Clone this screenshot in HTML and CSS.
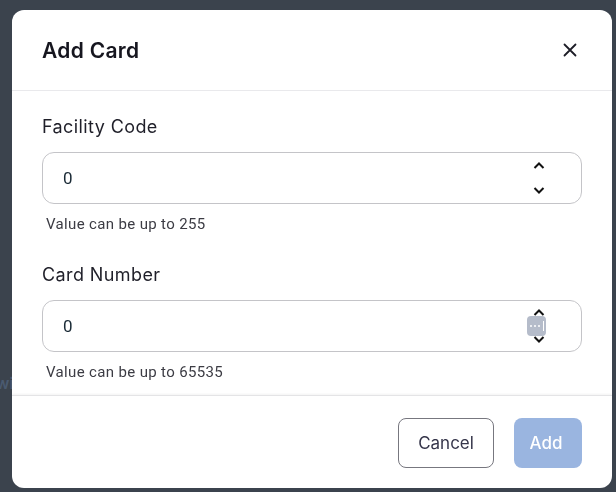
FILE: index.html
```html
<!DOCTYPE html>
<html lang="en">
<head>
<meta charset="utf-8">
<title>Add Card</title>
<link rel="stylesheet" href="styles.css">
</head>
<body>
  <div class="page">
    <p class="page-line">with</p>
  </div>

  <div class="backdrop">
    <div class="modal" role="dialog" aria-labelledby="modal-title">
      <header class="modal-header">
        <h2 id="modal-title" class="modal-title">Add Card</h2>
        <button class="close-btn" aria-label="Close">
          <svg width="14" height="14" viewBox="0 0 14 14" aria-hidden="true">
            <path d="M1.5 1.5 L12.5 12.5 M12.5 1.5 L1.5 12.5" stroke="#1d1d27" stroke-width="1.8" stroke-linecap="round" fill="none"/>
          </svg>
        </button>
      </header>

      <div class="modal-body">
        <div class="field">
          <label class="field-label">Facility Code</label>
          <div class="number-input">
            <span class="number-value">0</span>
            <span class="spinner">
              <svg width="14" height="36" viewBox="0 0 14 36" aria-hidden="true">
                <path d="M2.5 8 L7 3.5 L11.5 8" stroke="#111" stroke-width="2" fill="none"/>
                <path d="M2.5 28 L7 32.5 L11.5 28" stroke="#111" stroke-width="2" fill="none"/>
              </svg>
            </span>
          </div>
          <p class="field-help">Value can be up to 255</p>
        </div>

        <div class="field">
          <label class="field-label">Card Number</label>
          <div class="number-input">
            <span class="number-value">0</span>
            <span class="spinner">
              <svg width="14" height="36" viewBox="0 0 14 36" aria-hidden="true">
                <path d="M2.5 7 L7 2.5 L11.5 7" stroke="#111" stroke-width="2" fill="none"/>
                <path d="M2.5 29 L7 33.5 L11.5 29" stroke="#111" stroke-width="2" fill="none"/>
              </svg>
              <span class="autofill-badge">
                <span class="dot"></span><span class="dot"></span><span class="dot"></span><span class="caret"></span>
              </span>
            </span>
          </div>
          <p class="field-help">Value can be up to 65535</p>
        </div>
      </div>

      <footer class="modal-footer">
        <button class="btn btn-outline">Cancel</button>
        <button class="btn btn-primary" disabled>Add</button>
      </footer>
    </div>
  </div>
</body>
</html>
```
FILE: styles.css
```css
* {
  box-sizing: border-box;
}

html, body {
  margin: 0;
  padding: 0;
  height: 100%;
}

body {
  background: #3b434d;
  font-family: "Inter", "Liberation Sans", sans-serif;
  overflow: hidden;
}

/* page content dimmed behind the dialog */
.page {
  position: relative;
  height: 100%;
}

.page-line {
  position: absolute;
  left: -4px;
  top: 373px;
  margin: 0;
  font-family: "Inter", sans-serif;
  font-size: 16px;
  font-weight: 600;
  color: #4a5a70;
}

.backdrop {
  position: fixed;
  inset: 0;
  padding: 10px 4px 4px 12px;
}

.modal {
  width: 600px;
  height: 478px;
  background: #fff;
  border-radius: 12px;
  display: flex;
  flex-direction: column;
  overflow: hidden;
}

.modal-header {
  height: 81px;
  flex: none;
  display: flex;
  align-items: center;
  justify-content: space-between;
  padding: 0 35px 0 30px;
  border-bottom: 1px solid #e9e9ec;
}

.modal-title {
  margin: 0;
  font-size: 21px;
  font-weight: 600;
  color: #16161f;
  letter-spacing: 0.3px;
}

.close-btn {
  border: 0;
  background: none;
  padding: 0;
  width: 14px;
  height: 14px;
  display: flex;
}

.modal-body {
  flex: 1;
  padding: 24px 30px 0;
  display: flex;
  flex-direction: column;
  gap: 30px;
}

.field {
  display: flex;
  flex-direction: column;
}

.field-label {
  font-size: 18px;
  line-height: 24px;
  letter-spacing: 0.4px;
  color: #1f1f29;
  margin-bottom: 13px;
}

.number-input {
  height: 52px;
  border: 1px solid #c4c4c8;
  border-radius: 12px;
  display: flex;
  align-items: center;
  justify-content: space-between;
  padding: 0 35px 0 20px;
}

.number-value {
  font-family: "Roboto", sans-serif;
  font-size: 17px;
  color: #1a2a36;
}

.spinner {
  position: relative;
  width: 14px;
  height: 36px;
  display: flex;
}

/* password-manager style badge sitting on the second spinner */
.autofill-badge {
  position: absolute;
  left: -5px;
  top: 8px;
  width: 19px;
  height: 20px;
  border-radius: 4px;
  background: #b5bcca;
  display: flex;
  align-items: center;
  justify-content: center;
  gap: 1.5px;
}

.autofill-badge .dot {
  width: 2.5px;
  height: 2.5px;
  border-radius: 50%;
  background: #fff;
}

.autofill-badge .caret {
  width: 1px;
  height: 10px;
  background: #fff;
  margin-left: 1px;
}

.field-help {
  margin: 11px 0 0 4px;
  font-family: "Roboto", sans-serif;
  font-size: 15px;
  line-height: 18px;
  letter-spacing: 0.35px;
  color: #3c3c44;
}

.modal-footer {
  flex: none;
  height: 93px;
  border-top: 1px solid #e4e4e6;
  box-shadow: 0 -1px 2px rgba(0, 0, 0, 0.05);
  display: flex;
  align-items: center;
  justify-content: flex-end;
  gap: 20px;
  padding: 2px 30px 0;
}

.btn {
  height: 50px;
  border-radius: 8px;
  font-family: "Inter", sans-serif;
  font-size: 17px;
  padding: 0;
}

.btn-outline {
  background: #fff;
  border: 1px solid #77777f;
  color: #35354a;
  width: 96px;
}

.btn-primary {
  background: #9ab5e0;
  border: 0;
  color: #fff;
  width: 68px;
  font-weight: 500;
  padding-right: 4px;
}
```
